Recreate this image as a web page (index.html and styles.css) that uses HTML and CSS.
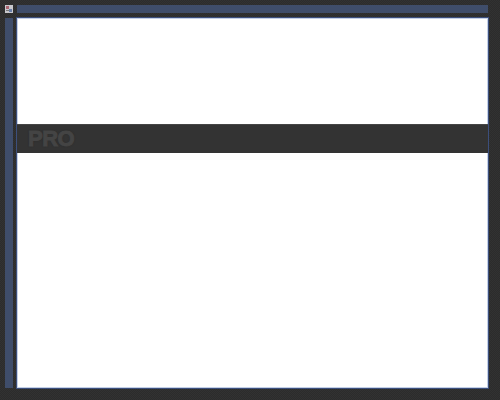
FILE: index.html
```html
<!DOCTYPE html>
<html>
<head>
  <title>PRO</title>
  <link rel="stylesheet" href="styles.css">
</head>
<body>
<div class="window">
  <div class="app-icon">
    <svg width="8" height="8" viewBox="0 0 8 8">
      <rect width="8" height="8" fill="#c8c8cc"/>
      <rect x="1" y="1" width="3" height="3" fill="#a8636f"/>
      <rect x="4" y="4" width="3" height="3" fill="#6a7fa8"/>
      <rect x="1" y="5" width="3" height="1" fill="#777"/>
    </svg>
  </div>
  <div class="top-bar"></div>
  <div class="side-bar"></div>
  <div class="content">
    <div class="pro-band">
      <span class="pro-label">PRO</span>
    </div>
  </div>
</div>
</body>
</html>
```

FILE: styles.css
```css
html, body {
  margin: 0;
  height: 100%;
}
body {
  background-color: #2f2f2f;
  background-image: repeating-conic-gradient(#2c2c2c 0 25%, #323232 0 50%);
  background-size: 2px 2px;
  font-family: "Liberation Sans", Arial, sans-serif;
}
.window {
  display: grid;
  grid-template-columns: 8px 471px;
  grid-template-rows: 9px 370px;
  column-gap: 4px;
  row-gap: 5px;
  padding: 4px 0 0 5px;
}
.app-icon {
  height: 8px;
  align-self: center;
}
.app-icon svg {
  display: block;
}
.top-bar {
  background-color: #3f4d6a;
  height: 8px;
  align-self: end;
}
.side-bar {
  background-color: #3f4d6a;
}
.content {
  box-sizing: border-box;
  background-color: #fff;
  border: 1px solid #c4d0e6;
  box-shadow: 0 0 0 1px #3c4f7c;
  padding-top: 105px;
}
.pro-band {
  background-color: #333;
  height: 29px;
  margin: 0 -1px;
  display: flex;
  align-items: center;
  padding-left: 11px;
  border-top: 1px solid #454545;
  box-sizing: border-box;
}
.pro-label {
  color: #444;
  font-size: 22px;
  font-weight: bold;
  letter-spacing: -0.5px;
  -webkit-text-stroke: 1px #444;
  text-shadow: 0 0 2px #262626;
}
```
